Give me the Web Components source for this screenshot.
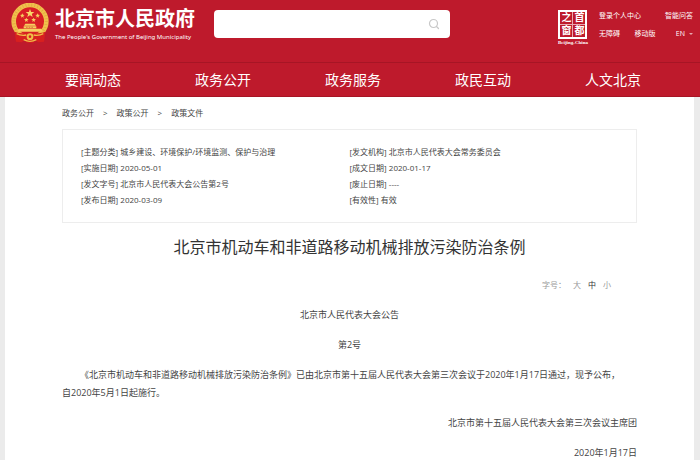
<!DOCTYPE html>
<html lang="zh-CN">
<head>
<meta charset="utf-8">
<title>北京市机动车和非道路移动机械排放污染防治条例</title>
<style>
  :root {
    --red: #be1a2c;
    --red-dark: #a71525;
    --text: #444;
    --muted: #999;
    --line: #ededed;
    scrollbar-width: none;
  }
  body {
    margin: 0;
    background: #ebebeb;
    color: var(--text);
    font: 8px/16px "Open Sans", "Noto Sans CJK SC", sans-serif;
  }
</style>
</head>
<body>
<gov-header></gov-header>
<gov-nav>
  <nav-item href="#news">要闻动态</nav-item>
  <nav-item href="#open">政务公开</nav-item>
  <nav-item href="#service">政务服务</nav-item>
  <nav-item href="#interact">政民互动</nav-item>
  <nav-item href="#culture">人文北京</nav-item>
</gov-nav>
<page-sheet>
  <bread-crumb></bread-crumb>
  <info-panel>
    <info-item label="[主题分类]">城乡建设、环境保护/环境监测、保护与治理</info-item>
    <info-item label="[发文机构]">北京市人民代表大会常务委员会</info-item>
    <info-item label="[实施日期]">2020-05-01</info-item>
    <info-item label="[成文日期]">2020-01-17</info-item>
    <info-item label="[发文字号]">北京市人民代表大会公告第2号</info-item>
    <info-item label="[废止日期]">----</info-item>
    <info-item label="[发布日期]">2020-03-09</info-item>
    <info-item label="[有效性]">有效</info-item>
  </info-panel>
  <doc-article>
    <span slot="title">北京市机动车和非道路移动机械排放污染防治条例</span>
    <doc-line align="center">北京市人民代表大会公告</doc-line>
    <doc-line align="center">第2号</doc-line>
    <doc-line align="body">《北京市机动车和非道路移动机械排放污染防治条例》已由北京市第十五届人民代表大会第三次会议于2020年1月17日通过，现予公布，<br>自2020年5月1日起施行。</doc-line>
    <doc-line align="right">北京市第十五届人民代表大会第三次会议主席团</doc-line>
    <doc-line align="right">2020年1月17日</doc-line>
  </doc-article>
</page-sheet>

<script>
const define = (name, html) => {
  const template = document.createElement('template');
  template.innerHTML = html;
  customElements.define(name, class extends HTMLElement {
    constructor() {
      super();
      this.attachShadow({ mode: 'open' }).append(template.content.cloneNode(true));
    }
    connectedCallback() {
      const link = this.shadowRoot.querySelector('[data-href]');
      if (link) link.href = this.getAttribute('href');
      const label = this.shadowRoot.querySelector('[data-label]');
      if (label) label.textContent = this.getAttribute('label');
    }
  });
};

define('national-emblem', `
  <style>:host { display: block; width: 38px; height: 40px; } svg { display: block; width: 100%; height: 100%; }</style>
  <svg viewBox="0 0 114 120" role="img" aria-label="国徽">
    <circle cx="57" cy="55" r="49" fill="#d91f25" stroke="#f0c04c" stroke-width="14"/>
    <circle cx="57" cy="55" r="49" fill="none" stroke="#c9862c" stroke-width="9" stroke-dasharray="2 7" opacity=".45"/>
    <path d="M57 18l3.400 9h9.600l-7.600 6 2.800 9.200-8.200-5.600-8.200 5.600 2.800-9.200-7.600-6h9.600z" fill="#f8d568"/>
    <g fill="#f6cf60">
      <path d="M34 31l2 4 5 1-4 3 1 5-4-3-4 3 1-5-4-3 5-1z"/>
      <path d="M80 31l2 4 5 1-4 3 1 5-4-3-4 3 1-5-4-3 5-1z"/>
      <path d="M46 44l2 4 5 1-4 3 1 5-4-3-4 3 1-5-4-3 5-1z"/>
      <path d="M68 44l2 4 5 1-4 3 1 5-4-3-4 3 1-5-4-3 5-1z"/>
      <path d="M43 62h28l4 6H39zM38 70h38v6H38zM23 77h68l4 9H19z"/>
    </g>
    <path d="M45 73h24" stroke="#c65d24" stroke-width="2" stroke-dasharray="5 3"/>
    <path d="M11 86Q25 93 44 90H70Q89 93 103 86L99 116L82 118L74 112L66 119H48L40 112L32 118L15 116Z" fill="#d8201f"/>
    <path d="M17 92Q30 99 46 96M97 92Q84 99 68 96M38 110Q57 120 76 110" fill="none" stroke="#f0bd48" stroke-width="4"/>
    <circle cx="57" cy="101" r="10" fill="#efbd49"/>
    <circle cx="57" cy="101" r="4" fill="#d8201f"/>
  </svg>`);

define('capital-seal', `
  <style>
    :host { display: flex; flex-direction: column; align-items: center; color: #fff; }
    .seal {
      display: grid; grid-template-columns: 12px 12px; grid-auto-rows: 12px; gap: 1px;
      border: 2px solid #fff; text-align: center;
      background: linear-gradient(#e9a9b0, #e9a9b0) center / 1px 100% no-repeat, linear-gradient(#e9a9b0, #e9a9b0) center / 100% 1px no-repeat;
      font: 700 10px/12px "Liberation Serif", "Noto Sans CJK SC", serif;
    }
    small { font: 700 5px/8px "Liberation Serif", serif; white-space: nowrap; }
  </style>
  <div class="seal"><span>之</span><span>首</span><span>窗</span><span>都</span></div>
  <small>Beijing-China</small>`);

define('search-box', `
  <style>
    :host { display: block; }
    form { display: flex; align-items: center; height: 28px; box-sizing: border-box; padding: 0 10px; border-radius: 4px; background: #fff; }
    input { flex: 1; min-width: 0; border: 0; padding: 0; outline: 0; background: none; font: inherit; color: #444; }
    button { display: block; border: 0; padding: 0; background: none; }
    svg { display: block; width: 12px; height: 12px; }
  </style>
  <form>
    <input type="text" aria-label="搜索">
    <button type="button" aria-label="搜索"><svg viewBox="0 0 12 12" fill="none" stroke="#c8c8c8" stroke-width="1.200" stroke-linecap="round"><circle cx="5.500" cy="5.500" r="4"/><path d="M8.500 8.500L10.500 10.500"/></svg></button>
  </form>`);

define('gov-header', `
  <style>
    :host {
      display: grid; grid-template-columns: 203px minmax(0, 236px) 1fr auto; align-items: start;
      height: 62px; box-sizing: border-box; padding: 3px 7px 0 11px;
      background: var(--red); color: #fff;
    }
    .brand { display: flex; gap: 6px; }
    .name { font: 700 20px/28px "Noto Sans CJK SC", sans-serif; padding-top: 1px; white-space: nowrap; }
    .en { font: 6px/10px "Noto Sans", sans-serif; white-space: nowrap; }
    search-box { margin-top: 7px; }
    .right { grid-column: 4; display: flex; gap: 11px; }
    capital-seal { margin-top: 7px; }
    .links { width: 94px; font-size: 7px; line-height: 18px; padding-top: 4px; }
    .row { display: flex; justify-content: space-between; white-space: nowrap; }
    a { color: inherit; text-decoration: none; }
    .lang { display: flex; align-items: center; gap: 4px; padding-left: 6px; }
    .lang::after { content: ""; border: 2px solid transparent; border-top-color: #e8a5ad; border-bottom: 0; }
  </style>
  <div class="brand">
    <national-emblem></national-emblem>
    <div><div class="name">北京市人民政府</div><div class="en">The People's Government of Beijing Municipality</div></div>
  </div>
  <search-box></search-box>
  <div class="right">
    <capital-seal></capital-seal>
    <div class="links">
      <div class="row"><a href="#login">登录个人中心</a><a href="#ask">智能问答</a></div>
      <div class="row"><a href="#access">无障碍</a><a href="#mobile">移动版</a><a class="lang" href="#en">EN</a></div>
    </div>
  </div>`);

define('gov-nav', `
  <style>
    :host { display: block; background: var(--red); border-top: 1px solid var(--red-dark); border-bottom: 1px solid var(--red-dark); }
    nav { display: flex; padding: 0 22px 0 28px; }
  </style>
  <nav><slot></slot></nav>`);

define('nav-item', `
  <style>
    :host { flex: 1; text-align: center; }
    a { color: #fff; text-decoration: none; font-size: 14px; line-height: 33px; }
  </style>
  <a data-href><slot></slot></a>`);

define('page-sheet', `
  <style>:host { display: block; margin: 0 6px 0 5px; padding: 8px 57px 0; background: #fff; }</style>
  <slot></slot>`);

define('bread-crumb', `
  <style>
    :host { display: block; }
    nav { display: flex; gap: 9px; }
    a { color: inherit; text-decoration: none; }
  </style>
  <nav aria-label="位置"><a href="#open">政务公开</a><span>&gt;</span><a href="#policy">政策公开</a><span>&gt;</span><a href="#files">政策文件</a></nav>`);

define('info-panel', `
  <style>
    :host { display: grid; grid-template-columns: 1fr 1fr; margin-top: 8px; padding: 14px 18px; border: 1px solid var(--line); }
  </style>
  <slot></slot>`);

define('info-item', `
  <style>:host { display: block; }</style>
  <span data-label></span> <slot></slot>`);

define('size-switch', `
  <style>
    :host { display: flex; justify-content: flex-end; gap: 7px; padding-right: 26px; color: var(--muted); }
    button { border: 0; padding: 0; background: none; font: inherit; color: inherit; }
    button[aria-pressed="true"] { color: #333; }
  </style>
  <span>字号：</span><button type="button">大</button><button type="button" aria-pressed="true">中</button><button type="button">小</button>`);

define('doc-article', `
  <style>
    :host { display: block; }
    h1 { margin: 11px 0 19px; text-align: center; color: #333; font: 400 16px/24px "Noto Sans CJK SC", sans-serif; }
    .body { display: flex; flex-direction: column; gap: 12px; margin-top: 13px; font-size: 9px; line-height: 18px; }
  </style>
  <article>
    <h1><slot name="title"></slot></h1>
    <size-switch></size-switch>
    <div class="body"><slot></slot></div>
  </article>`);

define('doc-line', `
  <style>
    :host { display: block; }
    p { margin: 0; }
    :host([align="center"]) p { text-align: center; }
    :host([align="right"]) p { text-align: right; }
    :host([align="body"]) p { text-indent: 2em; }
  </style>
  <p><slot></slot></p>`);
</script>
</body>
</html>
